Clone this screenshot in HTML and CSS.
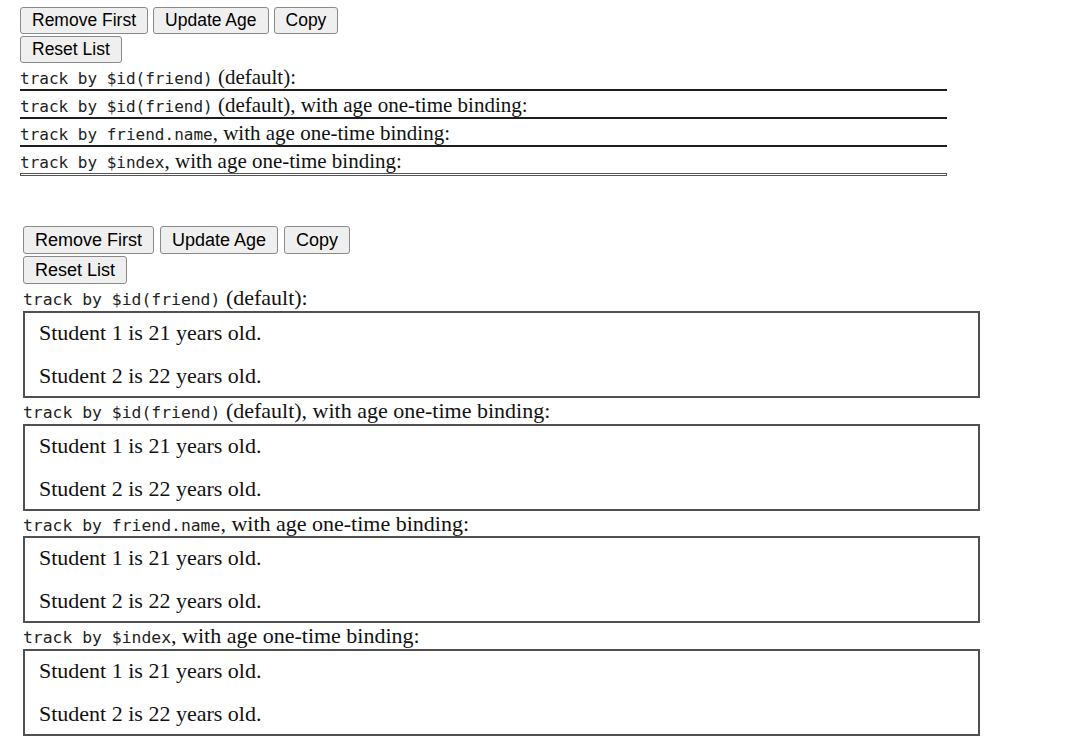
FILE: index.html
```html
<!DOCTYPE html>
<html>
<head>
<meta charset="utf-8">
<link rel="stylesheet" href="styles.css">
</head>
<body>
<div class="demo demo-empty">
  <div class="btn-row">
    <button class="btn">Remove First</button>
    <button class="btn">Update Age</button>
    <button class="btn">Copy</button>
  </div>
  <div class="btn-row">
    <button class="btn">Reset List</button>
  </div>
  <div class="label"><code>track by $id(friend)</code> (default):</div>
  <div class="list"></div>
  <div class="label"><code>track by $id(friend)</code> (default), with age one-time binding:</div>
  <div class="list"></div>
  <div class="label"><code>track by friend.name</code>, with age one-time binding:</div>
  <div class="list"></div>
  <div class="label"><code>track by $index</code>, with age one-time binding:</div>
  <div class="list list-last"></div>
</div>

<div class="demo demo-full">
  <div class="btn-row">
    <button class="btn">Remove First</button>
    <button class="btn">Update Age</button>
    <button class="btn">Copy</button>
  </div>
  <div class="btn-row">
    <button class="btn">Reset List</button>
  </div>
  <div class="label"><code>track by $id(friend)</code> (default):</div>
  <div class="list">
    <div class="item">Student 1 is 21 years old.</div>
    <div class="item">Student 2 is 22 years old.</div>
  </div>
  <div class="label"><code>track by $id(friend)</code> (default), with age one-time binding:</div>
  <div class="list">
    <div class="item">Student 1 is 21 years old.</div>
    <div class="item">Student 2 is 22 years old.</div>
  </div>
  <div class="label"><code>track by friend.name</code>, with age one-time binding:</div>
  <div class="list">
    <div class="item">Student 1 is 21 years old.</div>
    <div class="item">Student 2 is 22 years old.</div>
  </div>
  <div class="label"><code>track by $index</code>, with age one-time binding:</div>
  <div class="list">
    <div class="item">Student 1 is 21 years old.</div>
    <div class="item">Student 2 is 22 years old.</div>
  </div>
</div>
</body>
</html>
```
FILE: styles.css
```css
html, body {
  margin: 0;
  padding: 0;
  background: #fff;
}
body {
  font-family: "Liberation Serif", "Times New Roman", serif;
  color: #111;
}
.demo {
  display: flex;
  flex-direction: column;
}
.btn-row {
  display: flex;
}
.btn {
  font-family: "Liberation Sans", Arial, sans-serif;
  color: #000;
  background: #efefef;
  border: 1px solid #8a8a8a;
  border-radius: 3px;
  margin: 0;
  cursor: default;
}
code {
  font-family: "DejaVu Sans Mono", monospace;
  color: #222;
}

/* top (empty lists) */
.demo-empty {
  width: 927px;
  margin: 7px 0 0 20px;
}
.demo-empty .btn-row {
  gap: 5px;
}
.demo-empty .btn-row:first-child {
  margin-bottom: 2px;
}
.demo-empty .btn {
  font-size: 17.5px;
  height: 27px;
  padding: 0 11px;
}
.demo-empty .label {
  font-size: 21px;
  height: 26px;
  line-height: 28px;
}
.demo-empty code {
  font-size: 16px;
}
.demo-empty .list {
  height: 0;
  border: 1px solid #1e1e1e;
}
.demo-empty .list-last {
  height: 1px;
  border-color: #555;
}

/* bottom (filled lists) */
.demo-full {
  width: 957px;
  margin: 50px 0 0 23px;
}
.demo-full .btn-row {
  gap: 6px;
  margin-bottom: 1px;
}
.demo-full .btn-row:first-child {
  margin-bottom: 2px;
}
.demo-full .btn {
  font-size: 18px;
  height: 28px;
  padding: 0 11px;
}
.demo-full .label {
  font-size: 22px;
  height: 25.75px;
  line-height: 25px;
}
.demo-full code {
  font-size: 16.4px;
}
.demo-full .list {
  border: 2px solid #505050;
  padding: 7px 14px 8px;
  display: flex;
  flex-direction: column;
  gap: 18px;
}
.item {
  font-size: 22px;
  line-height: 25px;
  height: 25px;
}
```
